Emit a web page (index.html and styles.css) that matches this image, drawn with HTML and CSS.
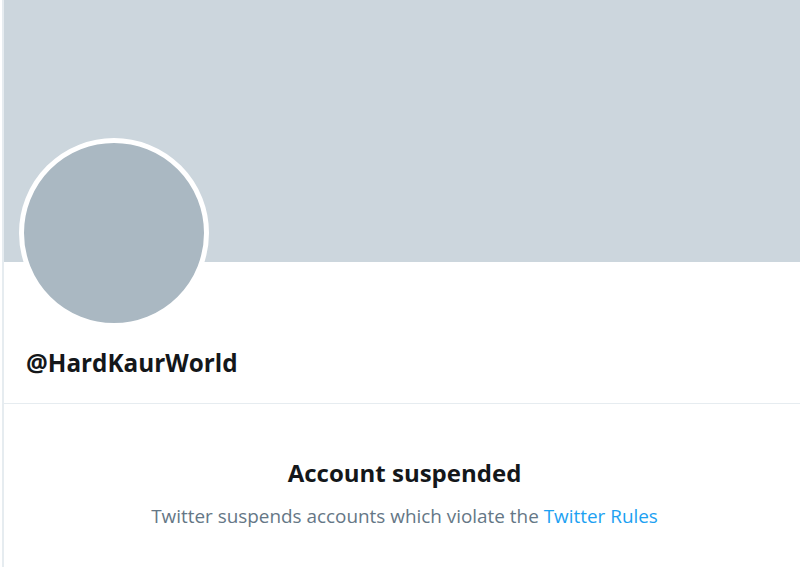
FILE: index.html
```html
<!DOCTYPE html>
<html lang="en">
<head>
<meta charset="utf-8">
<title>@HardKaurWorld</title>
<link rel="stylesheet" href="styles.css">
</head>
<body>
<main class="profile">
  <div class="banner"></div>
  <div class="avatar-wrap"><div class="avatar"></div></div>
  <div class="handle">@HardKaurWorld</div>
  <section class="suspended">
    <h1 class="title">Account suspended</h1>
    <p class="message">Twitter suspends accounts which violate the <a class="link" href="#">Twitter Rules</a></p>
  </section>
</main>
</body>
</html>
```

FILE: styles.css
```css
html, body {
  margin: 0;
  padding: 0;
  background: #ffffff;
}
body {
  font-family: "Open Sans", "Noto Sans", sans-serif;
  color: #14171a;
  overflow: hidden;
}
.profile {
  margin-left: 2px;
  border-left: 2px solid #e6ecf0;
  height: 567px;
}
.banner {
  height: 262px;
  background: #ccd6dd;
}
.avatar-wrap {
  margin-top: -124px;
  margin-left: 15px;
  width: 190px;
  height: 190px;
  position: relative;
}
.avatar {
  box-sizing: border-box;
  width: 190px;
  height: 190px;
  border-radius: 50%;
  border: 5px solid #ffffff;
  background: #aab8c2;
}
.handle {
  margin-top: 19px;
  padding: 0 0 24px 22px;
  font-size: 24.3px;
  line-height: 32px;
  font-weight: 700;
  border-bottom: 1px solid #e6ecf0;
}
.suspended {
  padding-top: 54px;
  padding-left: 5px;
  text-align: center;
}
.title {
  margin: 0;
  font-size: 24px;
  line-height: 30px;
  font-weight: 700;
}
.message {
  margin: 15px 0 0;
  font-size: 18.9px;
  line-height: 26px;
  color: #657786;
}
.link {
  color: #1da1f2;
  text-decoration: none;
}
```
